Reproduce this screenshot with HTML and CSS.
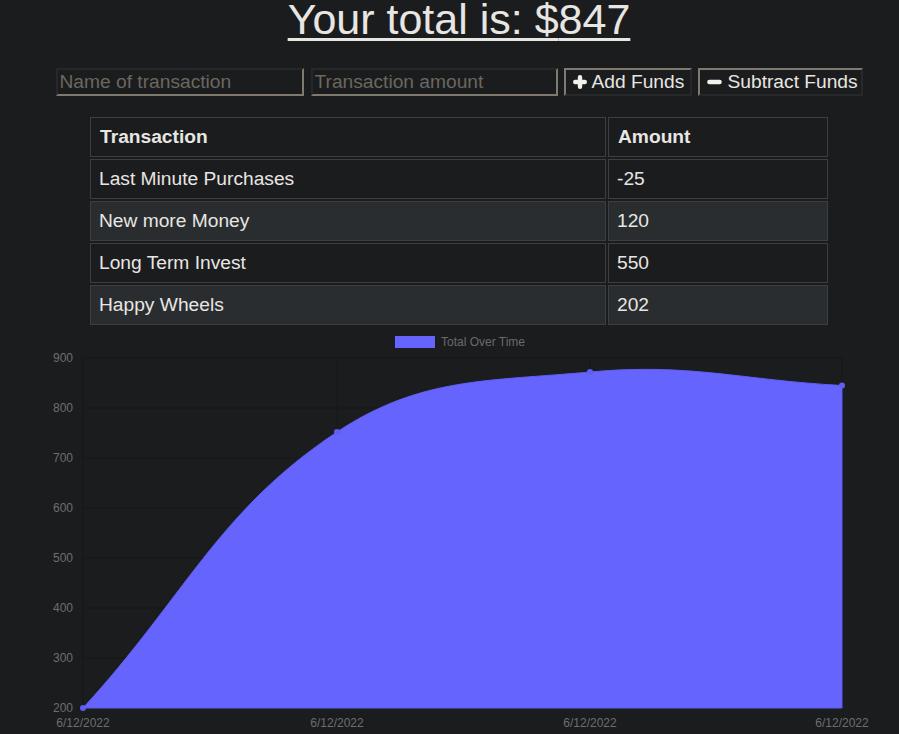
FILE: index.html
```html
<!DOCTYPE html>
<html>
<head>
<meta charset="utf-8">
<title>Budget Tracker</title>
<link rel="stylesheet" href="styles.css">
</head>
<body>
<div class="wrap">
  <h1 class="total">Your total is: $<span>847</span></h1>
  <div class="form">
    <input class="field field-name" type="text" placeholder="Name of transaction">
    <input class="field field-amount" type="number" placeholder="Transaction amount">
    <button class="btn btn-add"><svg class="ico" viewBox="0 0 14 14"><path d="M7 2.2V11.8M2.2 7H11.8" /></svg><span class="btn-label">Add Funds</span></button>
    <button class="btn btn-sub"><svg class="ico ico-minus" viewBox="0 0 15 14"><path d="M2.4 7H12.6" /></svg><span class="btn-label">Subtract Funds</span></button>
  </div>
  <table class="tx">
    <thead>
      <tr><th class="c-name">Transaction</th><th class="c-amt">Amount</th></tr>
    </thead>
    <tbody>
      <tr><td>Last Minute Purchases</td><td>-25</td></tr>
      <tr><td>New more Money</td><td>120</td></tr>
      <tr><td>Long Term Invest</td><td>550</td></tr>
      <tr><td>Happy Wheels</td><td>202</td></tr>
    </tbody>
  </table>
</div>
<div class="chart">
  <svg class="chart-svg" width="899" height="407" viewBox="0 327 899 407">
    <g class="grid">
      <line x1="83" y1="358" x2="842" y2="358"/>
      <line x1="83" y1="408" x2="842" y2="408"/>
      <line x1="83" y1="458" x2="842" y2="458"/>
      <line x1="83" y1="508" x2="842" y2="508"/>
      <line x1="83" y1="558" x2="842" y2="558"/>
      <line x1="83" y1="608" x2="842" y2="608"/>
      <line x1="83" y1="658" x2="842" y2="658"/>
      <line x1="83" y1="358" x2="83" y2="708"/>
      <line x1="337" y1="358" x2="337" y2="708"/>
      <line x1="590" y1="358" x2="590" y2="708"/>
      <line x1="842" y1="358" x2="842" y2="708"/>
    </g>
    <rect class="legend-box" x="395" y="336" width="40" height="12"/>
    <text class="legend-text" x="441" y="346">Total Over Time</text>
    <g class="ylab">
      <text x="73" y="362">900</text>
      <text x="73" y="412">800</text>
      <text x="73" y="462">700</text>
      <text x="73" y="512">600</text>
      <text x="73" y="562">500</text>
      <text x="73" y="612">400</text>
      <text x="73" y="662">300</text>
      <text x="73" y="712">200</text>
    </g>
    <g class="xlab">
      <text x="83" y="727">6/12/2022</text>
      <text x="337" y="727">6/12/2022</text>
      <text x="590" y="727">6/12/2022</text>
      <text x="842" y="727">6/12/2022</text>
    </g>
    <path class="area" d="M83,708 C184.6,597.6 217.2,511.4 337,432 C420,377 487.5,381.4 590,372 C689.5,362.8 741.2,380.1 842,385.5 L842,708 Z"/>
    <g class="pts">
      <circle cx="83" cy="708" r="3"/>
      <circle cx="337" cy="432" r="3"/>
      <circle cx="590" cy="372" r="3"/>
      <circle cx="842" cy="385.5" r="3"/>
    </g>
  </svg>
</div>
</body>
</html>
```

FILE: styles.css
```css
html, body {
  margin: 0;
  padding: 0;
  background: #1b1c1e;
  color: #e8e6e3;
  font-family: "Liberation Sans", Arial, sans-serif;
  overflow: hidden;
}

.wrap {
  padding-left: 19px;
}

.total {
  margin: -5px 0 0 0;
  font-size: 43px;
  line-height: 49px;
  font-weight: normal;
  text-align: center;
  text-decoration: underline;
  text-decoration-thickness: 3px;
  text-underline-offset: 4px;
  color: #e8e6e3;
}

.form {
  margin-top: 24px;
  display: flex;
  justify-content: center;
  align-items: flex-start;
}

.field {
  box-sizing: border-box;
  height: 28px;
  padding: 1px 2px;
  margin: 0;
  background: #1b1c1e;
  color: #e8e6e3;
  font-family: "Liberation Sans", Arial, sans-serif;
  font-size: 19.2px;
  border-width: 2px;
  border-style: solid;
  border-color: #26282a #807970 #807970 #26282a;
  outline: none;
  -moz-appearance: textfield;
}
.field::-webkit-outer-spin-button,
.field::-webkit-inner-spin-button {
  -webkit-appearance: none;
  margin: 0;
}
.field::placeholder {
  color: #6b675f;
}
.field-name {
  width: 248px;
}
.field-amount {
  width: 247px;
  margin-left: 7px;
}

.btn {
  box-sizing: border-box;
  height: 28px;
  margin: 0 0 0 6px;
  padding: 0 4px 0 7px;
  display: flex;
  align-items: center;
  white-space: nowrap;
  background: #1b1c1e;
  color: #e8e6e3;
  font-family: "Liberation Sans", Arial, sans-serif;
  font-size: 19.2px;
  line-height: 22px;
  border-width: 2px;
  border-style: solid;
  border-color: #807970 #26282a #26282a #807970;
}
.btn-label {
  white-space: nowrap;
}
.btn-add {
  width: 128px;
}
.btn-sub {
  width: 165px;
}
.ico {
  width: 14px;
  height: 14px;
  margin-right: 5px;
  flex: none;
}
.ico path {
  stroke: #f2f0ec;
  stroke-width: 4.4;
  stroke-linecap: round;
  fill: none;
}
.ico-minus {
  width: 15px;
  margin-right: 6px;
}

.tx {
  margin: 19px auto 0 auto;
  width: 742px;
  table-layout: fixed;
  border-collapse: separate;
  border-spacing: 2px;
  font-size: 19.2px;
  line-height: 22px;
}
.tx th, .tx td {
  box-sizing: border-box;
  height: 40px;
  padding: 8px 9px;
  border: 1px solid #3b3f42;
  text-align: left;
  color: #e8e6e3;
}
.tx th {
  font-weight: bold;
  padding-left: 9px;
}
.tx td {
  padding-left: 8px;
}
.c-name {
  width: 516px;
}
.c-amt {
  width: 220px;
}
.tx tbody tr:nth-child(even) td {
  background: #2a2d2f;
}

.chart {
  margin-top: 0;
}
.chart-svg {
  display: block;
}
.grid line {
  stroke: #151617;
  stroke-width: 1;
}
.legend-box {
  fill: #6565fe;
}
.legend-text {
  fill: #6a6a6a;
  font-family: "Liberation Sans", Arial, sans-serif;
  font-size: 12px;
}
.ylab text {
  fill: #6e6e6e;
  font-family: "Liberation Sans", Arial, sans-serif;
  font-size: 12px;
  text-anchor: end;
}
.xlab text {
  fill: #6e6e6e;
  font-family: "Liberation Sans", Arial, sans-serif;
  font-size: 12px;
  text-anchor: middle;
}
.area {
  fill: #6565fe;
  stroke: #5e5ef2;
  stroke-width: 1;
}
.pts circle {
  fill: #5f5ff3;
}
```
